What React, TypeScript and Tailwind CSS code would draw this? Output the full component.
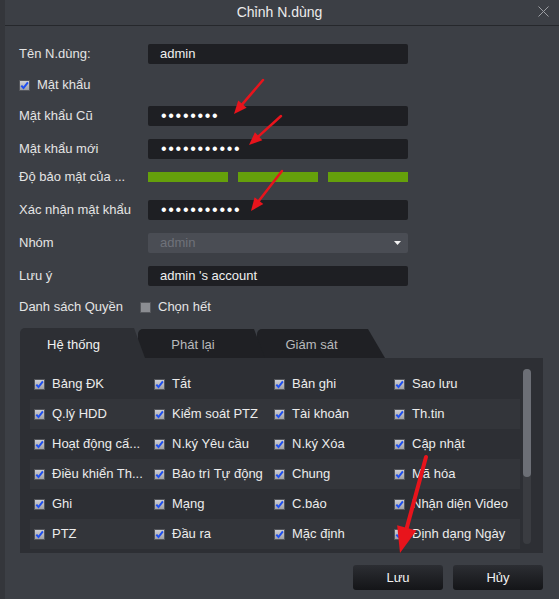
import type { ReactNode } from "react";

type Arrow = { x1: number; y1: number; x2: number; y2: number; w: number; hl: number; hw: number };

const arrows: Arrow[] = [
  { x1: 258, y1: 80, x2: 229, y2: 114, w: 2.5, hl: 13, hw: 11 },
  { x1: 276, y1: 116, x2: 244, y2: 145, w: 2.5, hl: 13, hw: 11 },
  { x1: 277, y1: 171, x2: 246, y2: 211, w: 2.5, hl: 13, hw: 11 },
  { x1: 421, y1: 457, x2: 395, y2: 553, w: 4, hl: 26, hw: 20 },
];

const permissions = [
  ["Bảng ĐK", "Tắt", "Bản ghi", "Sao lưu"],
  ["Q.lý HDD", "Kiểm soát PTZ", "Tài khoản", "Th.tin"],
  ["Hoạt động cấ...", "N.ký Yêu cầu", "N.ký Xóa", "Cập nhật"],
  ["Điều khiển Th...", "Bảo trì Tự động", "Chung", "Mã hóa"],
  ["Ghi", "Mạng", "C.báo", "Nhận diện Video"],
  ["PTZ", "Đầu ra", "Mặc định", "Định dạng Ngày"],
];

function CheckBox({ checked = true }: { checked?: boolean }) {
  return (
    <svg width="11" height="11" viewBox="0 0 11 11" className="shrink-0">
      <defs>
        <linearGradient id="cbg" x1="0" y1="0" x2="0" y2="1">
          <stop offset="0" stopColor="#d2d3d8" />
          <stop offset="1" stopColor="#9c9da3" />
        </linearGradient>
      </defs>
      <rect x="0.5" y="0.5" width="10" height="10" fill={checked ? "url(#cbg)" : "#8b8d92"} stroke="#55575c" />
      {checked && (
        <path d="M2.3 5.6 L4.5 8 L8.9 2.4" fill="none" stroke="#1f4ff0" strokeWidth="2" />
      )}
    </svg>
  );
}

function Row({ label, children, mt, labelW = "w-[129px]" }: { label: string; children: ReactNode; mt: string; labelW?: string }) {
  return (
    <div className={`flex h-[20px] items-center ${mt}`}>
      <span className={`${labelW} shrink-0 text-[13px] text-[#e4e4e4]`}>{label}</span>
      {children}
    </div>
  );
}

function Field({ children, dots = false }: { children: ReactNode; dots?: boolean }) {
  return (
    <div className={`flex h-[20px] w-[260px] items-center rounded-[2px] bg-[#1e1f23] ${dots ? "pl-[13px]" : "pl-[12px]"}`}>
      {dots ? (
        <span className="text-[16px] leading-none tracking-[1.7px] text-white">{children}</span>
      ) : (
        <span className="text-[13px] text-[#f0f0f0]">{children}</span>
      )}
    </div>
  );
}

function ArrowLayer() {
  return (
    <svg className="pointer-events-none absolute inset-0" width="559" height="599">
      {arrows.map((a, i) => {
        const dx = a.x2 - a.x1;
        const dy = a.y2 - a.y1;
        const len = Math.hypot(dx, dy);
        const ux = dx / len;
        const uy = dy / len;
        const bx = a.x2 - ux * a.hl;
        const by = a.y2 - uy * a.hl;
        const px = -uy * (a.hw / 2);
        const py = ux * (a.hw / 2);
        return (
          <g key={i} fill="#e8141c" stroke="#e8141c">
            <line x1={a.x1} y1={a.y1} x2={bx + ux * 2} y2={by + uy * 2} strokeWidth={a.w} strokeLinecap="round" />
            <polygon points={`${a.x2},${a.y2} ${bx + px},${by + py} ${bx - px},${by - py}`} stroke="none" />
          </g>
        );
      })}
    </svg>
  );
}

export default function App() {
  return (
    <div className="relative flex h-[599px] w-[559px] overflow-hidden border-l-[5px] border-[#34363b] bg-[#3c3f45] font-['Liberation_Sans',Arial,sans-serif]">
      <div className="flex flex-1 flex-col">
        {/* title bar */}
        <div className="relative flex h-[26px] shrink-0 items-center justify-center border-b border-[#26282c] pr-[5px]">
          <span className="text-[14px] text-[#ececec]">Chỉnh N.dùng</span>
          <svg className="absolute right-[10px] top-[6px]" width="11" height="11" viewBox="0 0 11 11">
            <path d="M0.5 0.5 L10.5 10.5 M10.5 0.5 L0.5 10.5" stroke="#9c9ea3" strokeWidth="1" />
          </svg>
        </div>

        <div className="flex flex-col pl-[14px]">
          <Row label="Tên N.dùng:" mt="mt-[18px]">
            <Field>admin</Field>
          </Row>

          <div className="mt-[11px] flex h-[20px] items-center gap-[7px]">
            <CheckBox />
            <span className="text-[13px] text-[#e4e4e4]">Mật khẩu</span>
          </div>

          <Row label="Mật khẩu Cũ" mt="mt-[11px]">
            <Field dots>••••••••</Field>
          </Row>

          <Row label="Mật khẩu mới" mt="mt-[13px]">
            <Field dots>•••••••••••</Field>
          </Row>

          <Row label="Độ bảo mật của ..." mt="mt-[8px]">
            <div className="flex w-[260px] gap-[10px]">
              <div className="h-[10px] w-[80px] bg-[#65a00b]" />
              <div className="h-[10px] w-[80px] bg-[#65a00b]" />
              <div className="h-[10px] w-[80px] bg-[#65a00b]" />
            </div>
          </Row>

          <Row label="Xác nhận mật khẩu" mt="mt-[13px]">
            <Field dots>•••••••••••</Field>
          </Row>

          <Row label="Nhóm" mt="mt-[13px]">
            <div className="flex h-[20px] w-[260px] items-center justify-between rounded-[2px] bg-[#4a4d54] pl-[12px] pr-[7px]">
              <span className="text-[13px] text-[#6f727a]">admin</span>
              <svg width="7" height="4" viewBox="0 0 7 4">
                <path d="M0 0 H7 L3.5 4 Z" fill="#f2f2f2" />
              </svg>
            </div>
          </Row>

          <Row label="Lưu ý" mt="mt-[13px]">
            <Field>admin 's account</Field>
          </Row>

          <Row label="Danh sách Quyền" mt="mt-[11px]" labelW="w-[121px]">
            <div className="flex items-center gap-[7px]">
              <CheckBox checked={false} />
              <span className="text-[13px] text-[#e4e4e4]">Chọn hết</span>
            </div>
          </Row>

          {/* tabs */}
          <div className="ml-[1px] mt-[11px] flex h-[30px]">
            <div className="relative z-30 flex h-[30px] w-[125px] items-center justify-center rounded-tl-[5px] bg-[#2d2f34] pr-[18px] pt-[4px] text-[13px] text-[#f2f2f2] [clip-path:polygon(0_0,114px_0,125px_100%,0_100%)]">
              Hệ thống
            </div>
            <div className="relative z-20 -ml-[7px] mt-[1px] flex h-[29px] w-[127px] items-center justify-center rounded-tl-[5px] bg-[#1f2024] pr-[17px] pt-[3px] text-[13px] text-[#b9babd] [clip-path:polygon(0_0,116px_0,127px_100%,0_100%)]">
              Phát lại
            </div>
            <div className="relative z-10 -ml-[8px] mt-[1px] flex h-[29px] w-[128px] items-center justify-center rounded-tl-[5px] bg-[#1f2024] pr-[19px] pt-[3px] text-[13px] text-[#b9babd] [clip-path:polygon(0_0,111px_0,128px_100%,0_100%)]">
              Giám sát
            </div>
          </div>

          {/* permission panel */}
          <div className="ml-[1px] flex h-[195px] w-[523px] bg-[#2d2f34] pt-[11px]">
            <div className="ml-[10px] flex w-[490px] flex-col">
              {permissions.map((row, r) => (
                <div key={r} className={`flex h-[30px] items-center ${r % 2 === 1 ? "bg-[#33353a]" : ""}`}>
                  {row.map((p) => (
                    <div key={p} className="flex w-[120px] items-center gap-[7px] pl-[4px]">
                      <CheckBox />
                      <span className="whitespace-nowrap text-[13px] text-[#ececec]">{p}</span>
                    </div>
                  ))}
                </div>
              ))}
            </div>
            <div className="ml-[3px] h-[175px] w-[8px] rounded-full bg-[#3a3c41]">
              <div className="h-[108px] w-[8px] rounded-full bg-[#6c6f76]" />
            </div>
          </div>

          {/* buttons */}
          <div className="ml-[1px] mt-[12px] flex w-[523px] justify-end gap-[10px]">
            <button className="h-[25px] w-[90px] rounded-[3px] bg-gradient-to-b from-[#2c2e33] to-[#141518] text-[13px] text-[#f2f2f2]">
              Lưu
            </button>
            <button className="h-[25px] w-[90px] rounded-[3px] bg-gradient-to-b from-[#2c2e33] to-[#141518] text-[13px] text-[#f2f2f2]">
              Hủy
            </button>
          </div>
        </div>
      </div>
      <ArrowLayer />
    </div>
  );
}
